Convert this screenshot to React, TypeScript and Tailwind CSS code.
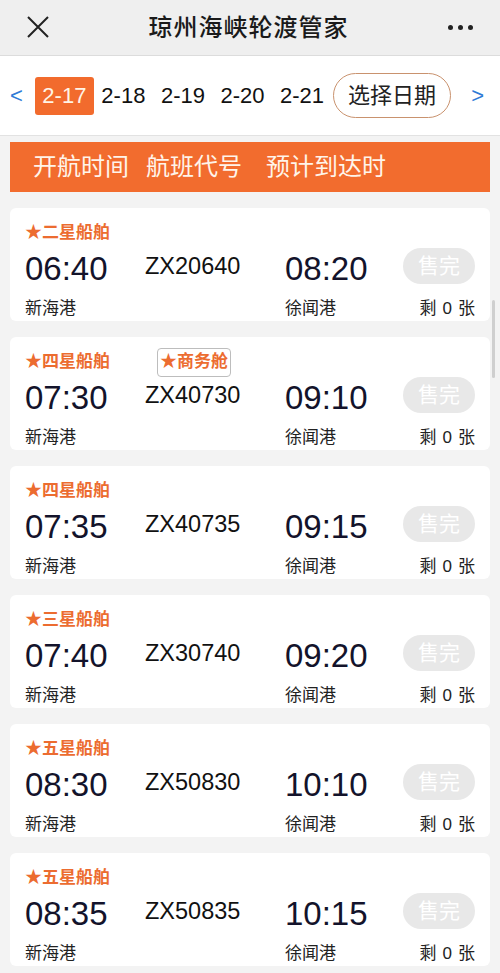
import * as React from 'react';

type Sailing = {
  grade: string;
  business?: boolean;
  depart: string;
  code: string;
  arrive: string;
};

const sailings: Sailing[] = [
  { grade: '二星船舶', depart: '06:40', code: 'ZX20640', arrive: '08:20' },
  { grade: '四星船舶', business: true, depart: '07:30', code: 'ZX40730', arrive: '09:10' },
  { grade: '四星船舶', depart: '07:35', code: 'ZX40735', arrive: '09:15' },
  { grade: '三星船舶', depart: '07:40', code: 'ZX30740', arrive: '09:20' },
  { grade: '五星船舶', depart: '08:30', code: 'ZX50830', arrive: '10:10' },
  { grade: '五星船舶', depart: '08:35', code: 'ZX50835', arrive: '10:15' },
];

const dates = ['2-17', '2-18', '2-19', '2-20', '2-21'];

const font = { fontFamily: '"Liberation Sans", "Noto Sans CJK SC", sans-serif' };

const TopBar = () => (
  <div className="flex h-[56px] items-center justify-between border-b border-[#dcdcdc] bg-[#efefef] px-[27px]">
    <svg width="22" height="22" viewBox="0 0 22 22" className="mt-[-1px]">
      <path d="M1 1 L21 21 M21 1 L1 21" stroke="#222" strokeWidth="2" />
    </svg>
    <div className="text-[24px] font-medium tracking-[1px] text-[#1a1a1a]">琼州海峡轮渡管家</div>
    <div className="flex gap-[5px]">
      <span className="h-[5px] w-[5px] rounded-full bg-[#222]" />
      <span className="h-[5px] w-[5px] rounded-full bg-[#222]" />
      <span className="h-[5px] w-[5px] rounded-full bg-[#222]" />
    </div>
  </div>
);

const DateRow = () => (
  <div className="flex h-[80px] items-center border-b border-[#e2e2e2] bg-white pl-[10px] pr-[16px]">
    <span className="text-[22px] text-[#2f7ad6]">&lt;</span>
    <div className="ml-[12px] flex items-center gap-[15.5px]">
      {dates.map((d, i) =>
        i === 0 ? (
          <span
            key={d}
            className="mr-[-8px] flex h-[38px] w-[59px] items-center justify-center rounded-[3px] bg-[#f26b2d] text-[22px] text-[#fff4e6]"
          >
            {d}
          </span>
        ) : (
          <span key={d} className="text-[22px] text-[#111]">
            {d}
          </span>
        ),
      )}
    </div>
    <span className="ml-[9px] flex h-[45px] w-[118px] items-center justify-center rounded-full border border-[#c9926e] text-[22px] text-[#222]">
      选择日期
    </span>
    <span className="ml-auto text-[22px] text-[#2f7ad6]">&gt;</span>
  </div>
);

const ColumnBar = () => (
  <div className="mx-[10px] mt-[6px] flex h-[50px] items-center bg-[#f26c2e] pl-[23px] text-[24px] text-[#fff4ea]">
    <span>开航时间</span>
    <span className="ml-[17px]">航班代号</span>
    <span className="ml-[24px]">预计到达时</span>
  </div>
);

const Card = ({ s }: { s: Sailing }) => (
  <div className="mx-[10px] rounded-[6px] bg-white px-[15px] pb-[3px] pt-[14px]">
    <div className="flex h-[22px] items-center">
      <span className="w-[132px] text-[17px] font-bold text-[#ec6c30]">★{s.grade}</span>
      {s.business && (
        <span className="flex h-[29px] items-center rounded-[4px] border border-[#bdbdbd] px-[2px] text-[17px] font-bold text-[#ec6c30]">
          ★商务舱
        </span>
      )}
    </div>
    <div className="mt-[4px] grid h-[40px] grid-cols-[120px_140px_118px_1fr] items-center">
      <span className="text-[33px] leading-none text-[#13132b]">{s.depart}</span>
      <span className="mt-[-3px] text-[23.5px] leading-none text-[#111]">{s.code}</span>
      <span className="text-[33px] leading-none text-[#13132b]">{s.arrive}</span>
      <span className="flex h-[36px] w-[72px] items-center justify-center self-start justify-self-end rounded-full bg-[#e8e8e8] text-[21px] text-white">
        售完
      </span>
    </div>
    <div className="mt-[8px] grid h-[22px] grid-cols-[260px_118px_1fr] items-center text-[17px] text-[#222]">
      <span>新海港</span>
      <span>徐闻港</span>
      <span className="flex gap-[6px] justify-self-end">
        <span>剩</span>
        <span>0</span>
        <span>张</span>
      </span>
    </div>
  </div>
);

export default function App() {
  return (
    <div className="relative min-h-[973px] overflow-hidden bg-[#f3f3f3]" style={font}>
      <TopBar />
      <DateRow />
      <ColumnBar />
      <div className="mt-[16px] flex flex-col gap-[16px]">
        {sailings.map((s, i) => (
          <Card key={i} s={s} />
        ))}
      </div>
      <div className="absolute right-[5px] top-[300px] h-[78px] w-[3px] rounded-full bg-[#cfcfcf]" />
    </div>
  );
}
